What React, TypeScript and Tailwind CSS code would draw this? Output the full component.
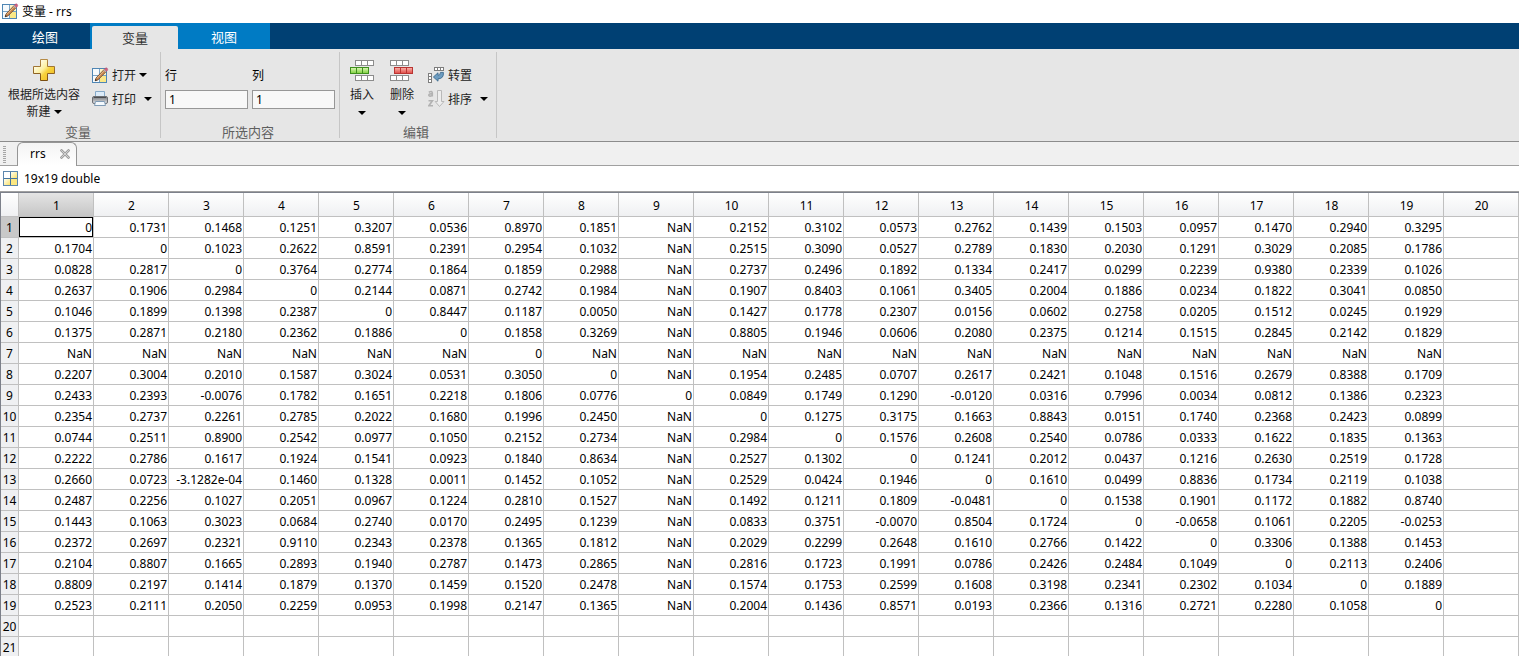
import React from "react";

const rows: string[] = [
  "0 0.1731 0.1468 0.1251 0.3207 0.0536 0.8970 0.1851 NaN 0.2152 0.3102 0.0573 0.2762 0.1439 0.1503 0.0957 0.1470 0.2940 0.3295",
  "0.1704 0 0.1023 0.2622 0.8591 0.2391 0.2954 0.1032 NaN 0.2515 0.3090 0.0527 0.2789 0.1830 0.2030 0.1291 0.3029 0.2085 0.1786",
  "0.0828 0.2817 0 0.3764 0.2774 0.1864 0.1859 0.2988 NaN 0.2737 0.2496 0.1892 0.1334 0.2417 0.0299 0.2239 0.9380 0.2339 0.1026",
  "0.2637 0.1906 0.2984 0 0.2144 0.0871 0.2742 0.1984 NaN 0.1907 0.8403 0.1061 0.3405 0.2004 0.1886 0.0234 0.1822 0.3041 0.0850",
  "0.1046 0.1899 0.1398 0.2387 0 0.8447 0.1187 0.0050 NaN 0.1427 0.1778 0.2307 0.0156 0.0602 0.2758 0.0205 0.1512 0.0245 0.1929",
  "0.1375 0.2871 0.2180 0.2362 0.1886 0 0.1858 0.3269 NaN 0.8805 0.1946 0.0606 0.2080 0.2375 0.1214 0.1515 0.2845 0.2142 0.1829",
  "NaN NaN NaN NaN NaN NaN 0 NaN NaN NaN NaN NaN NaN NaN NaN NaN NaN NaN NaN",
  "0.2207 0.3004 0.2010 0.1587 0.3024 0.0531 0.3050 0 NaN 0.1954 0.2485 0.0707 0.2617 0.2421 0.1048 0.1516 0.2679 0.8388 0.1709",
  "0.2433 0.2393 -0.0076 0.1782 0.1651 0.2218 0.1806 0.0776 0 0.0849 0.1749 0.1290 -0.0120 0.0316 0.7996 0.0034 0.0812 0.1386 0.2323",
  "0.2354 0.2737 0.2261 0.2785 0.2022 0.1680 0.1996 0.2450 NaN 0 0.1275 0.3175 0.1663 0.8843 0.0151 0.1740 0.2368 0.2423 0.0899",
  "0.0744 0.2511 0.8900 0.2542 0.0977 0.1050 0.2152 0.2734 NaN 0.2984 0 0.1576 0.2608 0.2540 0.0786 0.0333 0.1622 0.1835 0.1363",
  "0.2222 0.2786 0.1617 0.1924 0.1541 0.0923 0.1840 0.8634 NaN 0.2527 0.1302 0 0.1241 0.2012 0.0437 0.1216 0.2630 0.2519 0.1728",
  "0.2660 0.0723 -3.1282e-04 0.1460 0.1328 0.0011 0.1452 0.1052 NaN 0.2529 0.0424 0.1946 0 0.1610 0.0499 0.8836 0.1734 0.2119 0.1038",
  "0.2487 0.2256 0.1027 0.2051 0.0967 0.1224 0.2810 0.1527 NaN 0.1492 0.1211 0.1809 -0.0481 0 0.1538 0.1901 0.1172 0.1882 0.8740",
  "0.1443 0.1063 0.3023 0.0684 0.2740 0.0170 0.2495 0.1239 NaN 0.0833 0.3751 -0.0070 0.8504 0.1724 0 -0.0658 0.1061 0.2205 -0.0253",
  "0.2372 0.2697 0.2321 0.9110 0.2343 0.2378 0.1365 0.1812 NaN 0.2029 0.2299 0.2648 0.1610 0.2766 0.1422 0 0.3306 0.1388 0.1453",
  "0.2104 0.8807 0.1665 0.2893 0.1940 0.2787 0.1473 0.2865 NaN 0.2816 0.1723 0.1991 0.0786 0.2426 0.2484 0.1049 0 0.2113 0.2406",
  "0.8809 0.2197 0.1414 0.1879 0.1370 0.1459 0.1520 0.2478 NaN 0.1574 0.1753 0.2599 0.1608 0.3198 0.2341 0.2302 0.1034 0 0.1889",
  "0.2523 0.2111 0.2050 0.2259 0.0953 0.1998 0.2147 0.1365 NaN 0.2004 0.1436 0.8571 0.0193 0.2366 0.1316 0.2721 0.2280 0.1058 0",
  "",
  "",
];

const cells = rows.map((r) => r.split(" "));
const columns = Array.from({ length: 20 }, (_, i) => i);

function GridIcon() {
  return (
    <svg width="16" height="16" viewBox="0 0 16 16" className="shrink-0" aria-hidden="true">
      <defs>
        <linearGradient id="gridYellow" x1="0" y1="0" x2="1" y2="1">
          <stop offset="0" stopColor="#fffef0" />
          <stop offset="1" stopColor="#fbe26c" />
        </linearGradient>
      </defs>
      <rect x="0.5" y="0.5" width="14" height="14" fill="#fff" stroke="#5d87ad" />
      <rect x="1" y="8" width="6" height="6" fill="url(#gridYellow)" />
      <rect x="8" y="1" width="6" height="6" fill="url(#gridYellow)" />
      <rect x="8" y="8" width="6" height="6" fill="#fbe782" />
      <path d="M7.5 1V14M1 7.5H14" stroke="#46759f" />
    </svg>
  );
}

function PencilGridIcon() {
  return (
    <svg width="17" height="17" viewBox="0 0 17 17" className="shrink-0" aria-hidden="true">
      <rect x="0.5" y="1.5" width="14" height="14" fill="#f6fafc" stroke="#4f86b4" />
      <path d="M8 9H14V15H8Z" fill="#fbe887" />
      <path d="M8 2H14V8H8Z" fill="#fdf5c4" />
      <path d="M7.5 2V15M1 8.5H14" stroke="#7ba3c4" />
      <path d="M3.2 13.8L4 11L12 2.6L14.2 4.6L6 12.9Z" fill="#c9874f" stroke="#6b452a" strokeWidth="0.8" />
      <path d="M4.9 11.3L12.2 3.6" stroke="#efc596" strokeWidth="0.8" />
      <path d="M3 14L3.6 12.1L4.9 13.3Z" fill="#222" />
      <path d="M12.2 2.3L13.3 1.2Q14.2 0.4 15.2 1.3Q16.2 2.3 15.4 3.3L14.4 4.4Z" fill="#d4627f" stroke="#a2486a" strokeWidth="0.5" />
      <path d="M11.4 3.2L12.2 2.3L14.4 4.4L13.6 5.2Z" fill="#b3b3ba" />
    </svg>
  );
}

function PlusIcon() {
  return (
    <svg width="22" height="22" viewBox="0 0 22 22" aria-hidden="true">
      <defs>
        <linearGradient id="plusGold" x1="0" y1="0" x2="1" y2="1">
          <stop offset="0.1" stopColor="#fff" />
          <stop offset="0.45" stopColor="#fdf0a0" />
          <stop offset="0.6" stopColor="#f7d23c" />
          <stop offset="1" stopColor="#eeb41e" />
        </linearGradient>
        <linearGradient id="plusEdge" x1="0" y1="0" x2="0" y2="1">
          <stop offset="0" stopColor="#b58a45" />
          <stop offset="1" stopColor="#7a4e12" />
        </linearGradient>
      </defs>
      <path d="M7.5 0.5H14.5V7.5H21.5V14.5H14.5V21.5H7.5V14.5H0.5V7.5H7.5Z" fill="url(#plusGold)" stroke="url(#plusEdge)" />
    </svg>
  );
}

function PrinterIcon() {
  return (
    <svg width="17" height="16" viewBox="0 0 17 16" className="shrink-0" aria-hidden="true">
      <defs>
        <linearGradient id="printerBody" x1="0" y1="0" x2="0" y2="1">
          <stop offset="0" stopColor="#77797d" />
          <stop offset="0.4" stopColor="#a0a2a6" />
          <stop offset="1" stopColor="#e4e5e8" />
        </linearGradient>
      </defs>
      <path d="M3.5 5.5V0.5H12.5V5.5" fill="#dcebf8" stroke="#86a9c8" />
      <rect x="0.5" y="5.5" width="15" height="7" rx="1.5" fill="url(#printerBody)" stroke="#6d6f73" />
      <path d="M2 6.5H14" stroke="#4c4e52" />
      <path d="M3.5 10.5H12.5L13.5 14.5H2.5Z" fill="#f4f9fd" stroke="#7f9bb5" />
    </svg>
  );
}

function CellRow({ x, y, tone }: { x: number; y: number; tone: "plain" | "green" | "red" }) {
  const fill = { plain: "#fff", green: "url(#cellGreen)", red: "url(#cellRed)" }[tone];
  const stroke = { plain: "#8c8c8c", green: "#3f8f1d", red: "#b93432" }[tone];
  const height = tone === "plain" ? 5 : 6;
  return (
    <g fill={fill} stroke={stroke}>
      {[0, 6, 12].map((dx) => (
        <rect key={dx} x={x + dx + 0.5} y={y + 0.5} width="6" height={height} />
      ))}
    </g>
  );
}

function RowsIcon({ tone }: { tone: "green" | "red" }) {
  const outer = tone === "green" ? 5 : 0;
  const inner = tone === "green" ? 0 : 4;
  return (
    <svg width="24" height="22" viewBox="0 0 24 22" aria-hidden="true">
      <defs>
        <linearGradient id="cellGreen" x1="0" y1="0" x2="0" y2="1">
          <stop offset="0" stopColor="#dff8ba" />
          <stop offset="1" stopColor="#7ed13c" />
        </linearGradient>
        <linearGradient id="cellRed" x1="0" y1="0" x2="0" y2="1">
          <stop offset="0" stopColor="#f9b5ad" />
          <stop offset="1" stopColor="#e04a45" />
        </linearGradient>
      </defs>
      <CellRow x={outer} y={0} tone="plain" />
      <CellRow x={inner} y={7} tone={tone} />
      <CellRow x={outer} y={15} tone="plain" />
    </svg>
  );
}

function TransposeIcon() {
  return (
    <svg width="17" height="17" viewBox="0 0 17 17" className="shrink-0" aria-hidden="true">
      <g fill="#fff" stroke="#7d7d7d">
        <rect x="6.5" y="0.5" width="3" height="3" />
        <rect x="9.5" y="0.5" width="3" height="3" />
        <rect x="12.5" y="0.5" width="3" height="3" />
        <rect x="0.5" y="6.5" width="3" height="3" />
        <rect x="0.5" y="9.5" width="3" height="3" />
        <rect x="0.5" y="12.5" width="3" height="3" />
      </g>
      <path d="M5.4 10L10 5.8V8.3Q12.6 8.4 12.4 5.4L15.4 5.4Q16 11.6 10 11.9V14.2Z" fill="#6d9cc0" stroke="#3c6b90" strokeWidth="0.9" />
    </svg>
  );
}

function SortIcon() {
  return (
    <svg width="17" height="18" viewBox="0 0 17 18" className="shrink-0" aria-hidden="true">
      <g fill="none" stroke="#b2b2b2" strokeWidth="1.6">
        <path d="M0.8 2.2Q4.2 0.4 4.3 3V6.6M4.3 3.9Q0.8 3.6 0.8 5.2Q1.4 7 4.3 5.4" />
        <path d="M0.5 10.8H4.4L0.9 15.7H5" />
      </g>
      <path d="M9.5 0.5H13.5V11.5H16L11.5 16.5L7.2 11.5H9.5Z" fill="#ededed" stroke="#b9b9b9" />
    </svg>
  );
}

function Caret() {
  return (
    <svg width="8" height="4" viewBox="0 0 8 4" className="shrink-0" aria-hidden="true">
      <path d="M0 0H8L4 4Z" fill="#000" />
    </svg>
  );
}

function Group({ label, children }: { label: string; children: React.ReactNode }) {
  return (
    <section aria-label={label} className="my-[3px] flex flex-col justify-between border-r border-[#c6c6c6]">
      <div className="flex">{children}</div>
      <h2 className="pr-1 text-center text-[13px] leading-3 text-[#5f5f5f]">{label}</h2>
    </section>
  );
}

function SmallButton({ icon, label, wide, caret = true }: { icon: React.ReactNode; label: string; wide?: boolean; caret?: boolean }) {
  return (
    <button type="button" className="flex h-6 items-center">
      <span className="flex w-5 shrink-0">{icon}</span>
      <span className={wide ? "mr-2 pt-[2px]" : "mr-[3px] pt-[2px]"}>{label}</span>
      {caret && <Caret />}
    </button>
  );
}

function IndexField({ id, label }: { id: string; label: string }) {
  return (
    <div className="flex w-[83px] flex-col">
      <label htmlFor={id} className="flex h-6 items-center pt-[2px] text-black">{label}</label>
      <input
        id={id}
        defaultValue="1"
        className="mt-[3px] h-[19px] w-full border border-[#979797] bg-[#f8f8f8] px-[3px] text-xs leading-4 text-black outline-none"
      />
    </div>
  );
}

function BigButton({ icon, label }: { icon: React.ReactNode; label: string }) {
  return (
    <button type="button" className="flex w-10 flex-col items-center">
      {icon}
      <span className="mt-1 leading-[18px]">{label}</span>
      <span className="flex h-[18px] items-center"><Caret /></span>
    </button>
  );
}

export default function App() {
  return (
    <div className="flex h-screen flex-col overflow-hidden bg-white font-['Noto_Sans','Noto_Sans_CJK_SC',sans-serif] text-xs text-black">
      <header className="flex h-[23px] shrink-0 items-center gap-[3px] pl-[2px]">
        <PencilGridIcon />
        <h1 className="pt-px leading-4">变量 - rrs</h1>
      </header>

      <nav className="flex h-[26px] shrink-0 bg-[#004073] text-[13px] text-white" role="tablist">
        <button type="button" role="tab" className="w-[90px] pt-[2px] leading-5">绘图</button>
        <div className="flex bg-[#007bc4] pl-[2px]">
          <button type="button" role="tab" aria-selected="true" className="mt-[3px] w-[86px] rounded-t-xs bg-[#e6e6e6] leading-5 text-[#333]">变量</button>
          <button type="button" role="tab" className="w-[92px] pt-[2px] leading-5">视图</button>
        </div>
      </nav>

      <div className="flex h-[93px] shrink-0 border-b border-[#8c8c8c] bg-[#e6e6e6] text-[#222]">
        <Group label="变量">
          <button type="button" className="ml-2 mt-[7px] flex w-[72px] flex-col items-center">
            <PlusIcon />
            <span className="mt-[5px] whitespace-nowrap leading-[18px]">根据所选内容</span>
            <span className="flex h-4 items-center gap-[3px]">新建 <Caret /></span>
          </button>
          <div className="ml-3 mr-2 mt-[11px] flex w-[60px] flex-col">
            <SmallButton icon={<PencilGridIcon />} label="打开" />
            <SmallButton icon={<PrinterIcon />} label="打印" wide />
          </div>
        </Group>
        <Group label="所选内容">
          <div className="ml-1 mr-1 mt-[11px] flex gap-1">
            <IndexField id="row-index" label="行" />
            <IndexField id="column-index" label="列" />
          </div>
        </Group>
        <Group label="编辑">
          <div className="ml-[2px] mt-2 flex">
            <BigButton icon={<RowsIcon tone="green" />} label="插入" />
            <BigButton icon={<RowsIcon tone="red" />} label="删除" />
          </div>
          <div className="ml-[6px] mr-2 mt-[11px] flex flex-col">
            <SmallButton icon={<TransposeIcon />} label="转置" caret={false} />
            <SmallButton icon={<SortIcon />} label="排序" wide />
          </div>
        </Group>
      </div>

      <div className="flex h-6 shrink-0 border-b border-[#a0a0a0] bg-[#f0f0f0] pl-[3px]">
        <svg width="3" height="17" viewBox="0 0 3 17" className="mr-[11px] mt-1" aria-hidden="true">
          <path d="M1.5 0V17" stroke="#a6a6a6" strokeWidth="3" strokeDasharray="1 1" />
        </svg>
        <div className="-mb-px flex w-[60px] items-center justify-between rounded-t-md border border-b-0 border-[#959595] bg-linear-to-b from-[#f4f4f4] to-white pb-[2px] pl-3 pr-[6px]">
          <button type="button" role="tab" aria-selected="true" className="leading-4">rrs</button>
          <button type="button" aria-label="关闭">
            <svg width="10" height="10" viewBox="0 0 10 10" aria-hidden="true">
              <path d="M1.5 1.5L8.5 8.5M8.5 1.5L1.5 8.5" stroke="#a0a0a0" strokeWidth="2.6" strokeLinecap="square" />
              <path d="M1.5 1.5L8.5 8.5M8.5 1.5L1.5 8.5" stroke="#dedede" strokeWidth="0.8" strokeLinecap="square" />
            </svg>
          </button>
        </div>
      </div>

      <div className="flex h-[25px] shrink-0 items-center gap-[5px] pl-[3px]">
        <GridIcon />
        <span className="leading-4">19x19 double</span>
      </div>

      <main className="min-h-0 flex-1 overflow-hidden border-t border-[#a0a0a0]">
        <table className="w-full table-fixed border-separate border-spacing-0 border-l border-t border-[#7c808a]">
          <thead>
            <tr>
              <th className="h-6 w-[18px] border-b border-r border-[#c0c0c0] bg-linear-to-b from-white to-[#eff0f2] p-0" />
              {columns.map((c) => (
                <th
                  key={c}
                  scope="col"
                  className={
                    c === 0
                      ? "h-6 border-b border-r border-[#c0c0c0] bg-linear-to-b from-[#e4e4e4] to-[#c6c6c6] p-0 pl-px pt-[2px] font-normal leading-[18px]"
                      : "h-6 border-b border-r border-[#c0c0c0] bg-linear-to-b from-white to-[#eff0f2] p-0 pl-px pt-[2px] font-normal leading-[18px]"
                  }
                >
                  {c + 1}
                </th>
              ))}
            </tr>
          </thead>
          <tbody>
            {cells.map((row, r) => (
              <tr key={r}>
                <th
                  scope="row"
                  className={
                    r === 0
                      ? "h-[21px] border-b border-r border-[#c0c0c0] bg-[#c8c8c8] p-0 pt-[2px] font-normal leading-[18px]"
                      : "h-[21px] border-b border-r border-[#c0c0c0] bg-[#eff0f2] p-0 pt-[2px] font-normal leading-[18px]"
                  }
                >
                  {r + 1}
                </th>
                {columns.map((c) => (
                  <td
                    key={c}
                    className={
                      r === 0 && c === 0
                        ? "h-[21px] whitespace-nowrap border-b border-r border-[#c0c0c0] p-0 pr-px pt-[2px] text-right leading-[18px] ring-1 ring-black ring-inset"
                        : "h-[21px] whitespace-nowrap border-b border-r border-[#c0c0c0] p-0 pr-px pt-[2px] text-right leading-[18px]"
                    }
                  >
                    {row[c] ?? ""}
                  </td>
                ))}
              </tr>
            ))}
          </tbody>
        </table>
      </main>
    </div>
  );
}
